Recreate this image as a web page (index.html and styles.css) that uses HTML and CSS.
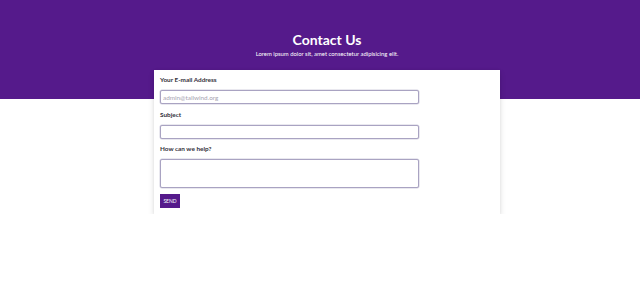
FILE: index.html
```html
<!DOCTYPE html>
<html lang="en">
<head>
<meta charset="utf-8">
<title>Contact Us</title>
<link rel="stylesheet" href="styles.css">
</head>
<body>
<header class="hero">
  <h1 class="hero-title">Contact Us</h1>
  <p class="hero-sub">Lorem ipsum dolor sit, amet consectetur adipisicing elit.</p>
</header>
<main class="wrap">
  <form class="card">
    <label class="field-label" for="email">Your E-mail Address</label>
    <input class="field-input" id="email" type="email" placeholder="admin@tailwind.org">
    <label class="field-label" for="subject">Subject</label>
    <input class="field-input" id="subject" type="text">
    <label class="field-label" for="msg">How can we help?</label>
    <textarea class="field-area" id="msg"></textarea>
    <button class="send" type="button">SEND</button>
  </form>
</main>
</body>
</html>
```
FILE: styles.css
```css
* { box-sizing: border-box; }
html, body { margin: 0; padding: 0; background: #fff; }
body { font-family: Lato, "Noto Sans", sans-serif; color: #2d2d35; }

.hero {
  background: #551a8b;
  height: 99px;
  padding: 33px 0 0 14px;
  text-align: center;
  color: #fff;
}
.hero-title {
  margin: 0;
  font-size: 14px;
  line-height: 14px;
  font-weight: 700;
}
.hero-sub {
  margin: 3px 0 0;
  font-size: 5.9px;
  line-height: 8px;
}

.wrap {
  margin-top: -29px;
  padding-left: 14px;
}
.card {
  width: 346px;
  margin: 0 auto;
  background: #fff;
  padding: 6px;
  box-shadow: 0 3px 6px rgba(0, 0, 0, 0.14), 0 0 2px rgba(0, 0, 0, 0.06);
  display: flex;
  flex-direction: column;
  align-items: flex-start;
}
.field-label {
  display: block;
  font-size: 6.4px;
  line-height: 8px;
  font-weight: 700;
  color: #33313b;
  margin-bottom: 6px;
}
.field-input, .field-area {
  display: block;
  width: 259px;
  border: 1px solid #a9a3c2;
  border-radius: 2px;
  box-shadow: 0 0 0 0.5px #d4d1e0;
  font-family: Lato, "Noto Sans", sans-serif;
  font-size: 6.4px;
  padding: 0 2px;
  margin: 0 0 6px;
  background: #fff;
  outline: none;
}
.field-input { height: 14px; }
.field-input:first-of-type { margin-bottom: 7px; }
.field-input::placeholder { color: #a6a3b0; }
.field-area { height: 29px; resize: none; }
.send {
  width: 20px;
  height: 14px;
  padding: 0;
  border: 0;
  border-radius: 0;
  background: #551a8b;
  color: #fff;
  font-family: Lato, "Noto Sans", sans-serif;
  font-size: 5px;
  line-height: 14px;
}
```
